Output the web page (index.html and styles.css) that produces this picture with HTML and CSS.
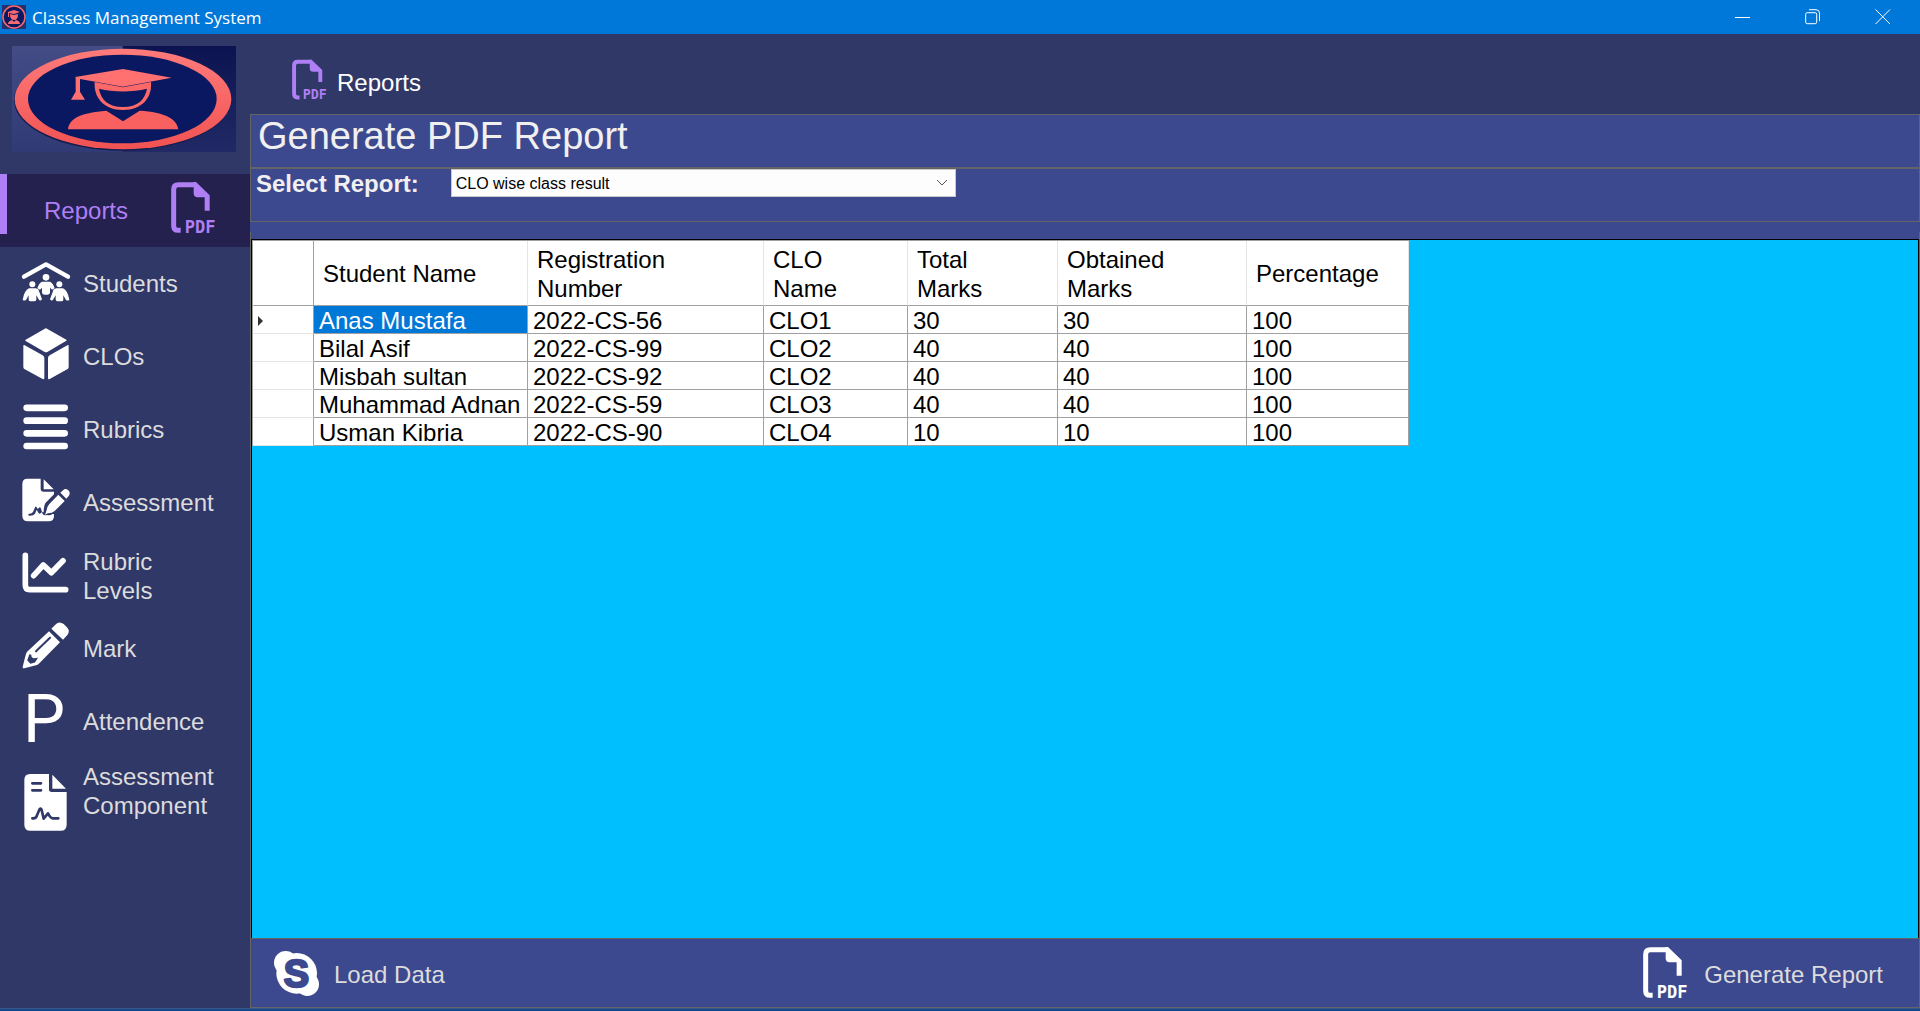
FILE: index.html
```html
<!DOCTYPE html>
<html lang="en">
<head>
<meta charset="utf-8">
<title>Classes Management System</title>
<link rel="stylesheet" href="styles.css">
</head>
<body>
<svg class="defs" aria-hidden="true">
  <defs>
    <linearGradient id="coral" x1="0" y1="0" x2="0" y2="1"><stop offset="0" stop-color="#ff7b7b"/><stop offset="1" stop-color="#f15252"/></linearGradient>
    <linearGradient id="left" x1="0" y1="0" x2="0" y2="1"><stop offset="0" stop-color="#434c85"/><stop offset="1" stop-color="#303a75"/></linearGradient>
    <linearGradient id="right" x1="0" y1="0" x2="0" y2="1"><stop offset="0" stop-color="#0b1450"/><stop offset="1" stop-color="#222a66"/></linearGradient>
    <symbol id="logo" viewBox="0 0 672 318" preserveAspectRatio="none">
      <rect width="340" height="318" fill="url(#left)"/>
      <rect x="332" width="340" height="318" fill="url(#right)"/>
      <ellipse cx="331" cy="163" rx="325" ry="151" fill="#151c4e"/>
      <ellipse cx="333" cy="159" rx="325" ry="151" fill="url(#coral)"/>
      <ellipse cx="331" cy="159" rx="283" ry="133" fill="#0a1862"/>
      <path fill="#ff7070" d="M190 93 333 69l146 26-146 27-129-23v38l15 24h-42l14-24V97z"/>
      <path fill="#fb6868" fill-rule="evenodd" d="M248 108l85 16 84-16c4 45-25 84-84 84s-88-39-85-84zm13 20c5 32 27 55 72 55s66-23 72-55c-44 11-100 11-144 0z"/>
      <path fill="#f96060" d="M168 250c4-34 40-50 115-56l50 32 50-32c74 5 111 22 116 56z"/>
    </symbol>
    <symbol id="pdf" viewBox="0 0 138 156">
      <path d="M29 145H21Q8 145 8 131V22Q8 8 22 8H74" fill="none" stroke="currentColor" stroke-width="15"/>
      <path d="M66 0h9l41 40v46h-15V46H80q-12 0-12-12V10z" fill="currentColor"/>
      <text x="41" y="152" class="pdf-text">PDF</text>
    </symbol>
  </defs>
</svg>

<header class="titlebar">
  <svg class="titlebar-icon" viewBox="0 0 24 24" aria-hidden="true">
    <rect width="24" height="24" fill="#26306a"/>
    <circle cx="12" cy="12" r="11" fill="#0a1862" stroke="#f96a70" stroke-width="1.500"/>
    <path fill="#f96a70" d="M6 7l6-2 6 2-6 2-5-1v4H6zM8 9l4 1 4-1q0 6-4 6T8 9zM6 19q0-3 4-4l2 2 2-2q4 1 4 4z"/>
  </svg>
  <span class="titlebar-name">Classes Management System</span>
  <button class="window-button" aria-label="Minimize"><svg viewBox="0 0 16 16"><path d="M0 8.500H15"/></svg></button>
  <button class="window-button" aria-label="Restore"><svg viewBox="0 0 16 16"><rect x=".7" y="3.700" width="11" height="11" rx="1.500"/><path d="M4 .7h7q3.500 0 3.500 3.500V12"/></svg></button>
  <button class="window-button" aria-label="Close"><svg viewBox="0 0 16 16"><path d="M.5.5l14.500 14.500M15 .5L.5 15"/></svg></button>
</header>

<div class="app">
  <nav class="sidebar">
    <svg class="logo" role="img" aria-label="Graduate logo"><use href="#logo"/></svg>
    <a href="#" class="nav-item active"><span>Reports</span><svg class="pdf-icon"><use href="#pdf"/></svg></a>
    <a href="#" class="nav-item">
      <svg class="nav-icon" viewBox="66 40 144 180"><path d="M72 108l66-37 66 37" fill="none" stroke="#fff" stroke-width="13" stroke-linecap="round" stroke-linejoin="round"/>
        <circle cx="138" cy="110" r="10"/><circle cx="97" cy="131" r="9"/><circle cx="178" cy="131" r="9"/>
        <path d="M126 123h24q10 5 14 20l-8 4-6-6v16q-2 5-8 5h-8q-6 0-8-5v-16l-6 6-8-4q4-15 14-20z"/>
        <path d="M87 143h20l8 3 11 30q-6 7-10 0l-7-12v13q-1 5-7 5H92q-6 0-6-5v-13l-8 14q-6 4-10-1 5-28 19-34z"/>
        <path d="M189 143h-20l-8 3-11 30q6 7 10 0l7-12v13q1 5 7 5h10q6 0 6-5v-13l8 14q6 4 10-1-5-28-19-34z"/></svg>
      <span>Students</span></a>
    <a href="#" class="nav-item">
      <svg class="nav-icon" viewBox="66 260 144 180"><path d="M137 264q2-1 4 1l58 33q2 2 0 3l-57 34q-4 2-8 0l-57-33q-3-2 0-4zM70 317q0-4 4-2l54 30q5 3 5 8v61q-1 4-5 2l-55-30q-3-2-3-6zM206 317q0-4-4-2l-53 30q-5 3-5 8v61q1 4 5 2l54-30q3-2 3-6z"/></svg>
      <span>CLOs</span></a>
    <a href="#" class="nav-item">
      <svg class="nav-icon" viewBox="66 478 144 180"><path d="M80 501.500H194M80 540H194M80 578H194M80 616H194" stroke="#fff" stroke-width="20" stroke-linecap="round"/></svg>
      <span>Rubrics</span></a>
    <a href="#" class="nav-item">
      <svg class="nav-icon" viewBox="66 698 144 180"><path d="M82 715H122V745q0 9 9 9h31v8l-25 25q-5 6-6 27-2 5-6-1-3-15-6-12l-6 5q-4-10-7-7l-7 16q-4 6-12 5-4 3 0 6 13 1 18-6l5-12 6 11q4 3 9-3 5 12 16 8 11 2 16-3 5-1 5 2v5q0 15-16 15H84q-17 0-17-17V731q0-16 15-16z"/><path d="M131 717l30 30h-30zM175 763l19 19-30 30q-8 7-19 7-4 0-11 5 4-7 6-15 1-10 8-18zM181 757l9-8q6-6 15 1 8 8 1 17l-7 8z"/></svg>
      <span>Assessment</span></a>
    <a href="#" class="nav-item">
      <svg class="nav-icon" viewBox="66 47 144 180"><path d="M76 75V165q0 13 13 13H197M101 136l29-32 24 23 35-36" fill="none" stroke="#fff" stroke-width="17" stroke-linecap="round" stroke-linejoin="round"/></svg>
      <span>Rubric<br>Levels</span></a>
    <a href="#" class="nav-item">
      <svg class="nav-icon" viewBox="66 266 144 180"><path d="M147 303l33 33-62 63q-4 4-10 6l-35 9q-6 1-5-5l9-35q2-7 6-11z"/><path d="M154 295l12-12q11-12 25-2l9 9q12 11 2 24l-13 14z"/><path d="M150 322l-42 41M91 373q-1 16 17 13l-5 8-11 3-7-8z" fill="#303868" stroke="#303868" stroke-width="6" stroke-linecap="round"/></svg>
      <span>Mark</span></a>
    <a href="#" class="nav-item">
      <svg class="nav-icon" viewBox="66 485 144 180"><text x="69" y="636" class="letter-icon">P</text></svg>
      <span>Attendence</span></a>
    <a href="#" class="nav-item nav-item-short">
      <svg class="nav-icon" viewBox="66 675 144 216"><path d="M90 732h57v46q0 8 8 8h45v98q0 18-18 18H91q-18 0-18-18V750q0-18 17-18zM157 734l41 42h-41z"/><path d="M97 760h26M97 781h26M97 865q11 2 14-9l8-19q4-3 6 3l6 26 13-16q7 16 16 15h15" fill="none" stroke="#303868" stroke-width="8" stroke-linecap="round" stroke-linejoin="round"/></svg>
      <span>Assessment<br>Component</span></a>
  </nav>

  <main class="main">
    <div class="page-title"><svg class="page-icon"><use href="#pdf"/></svg><span>Reports</span></div>
    <div class="content">
      <div class="panel heading-panel"><h1>Generate PDF Report</h1></div>
      <div class="panel filter-panel">
        <label for="report">Select Report:</label>
        <div class="select-box">
          <select id="report"><option>CLO wise class result</option></select>
          <svg class="chevron" viewBox="0 0 12 8"><path d="M1 1l5 5 5-5"/></svg>
        </div>
      </div>
      <div class="grid-panel">
        <div class="grid">
          <table>
            <colgroup><col class="c-head"><col class="c-name"><col class="c-reg"><col class="c-clo"><col class="c-total"><col class="c-obt"><col class="c-pct"></colgroup>
            <thead><tr><th class="row-head"></th><th>Student Name</th><th>Registration<br>Number</th><th>CLO<br>Name</th><th>Total<br>Marks</th><th>Obtained<br>Marks</th><th>Percentage</th></tr></thead>
            <tbody>
              <tr><td class="row-head"><svg class="pointer" viewBox="0 0 5 10"><path d="M0 0l5 5-5 5z"/></svg></td><td class="selected">Anas Mustafa</td><td>2022-CS-56</td><td>CLO1</td><td>30</td><td>30</td><td>100</td></tr>
              <tr><td class="row-head"></td><td>Bilal Asif</td><td>2022-CS-99</td><td>CLO2</td><td>40</td><td>40</td><td>100</td></tr>
              <tr><td class="row-head"></td><td>Misbah sultan</td><td>2022-CS-92</td><td>CLO2</td><td>40</td><td>40</td><td>100</td></tr>
              <tr><td class="row-head"></td><td>Muhammad Adnan</td><td>2022-CS-59</td><td>CLO3</td><td>40</td><td>40</td><td>100</td></tr>
              <tr><td class="row-head"></td><td>Usman Kibria</td><td>2022-CS-90</td><td>CLO4</td><td>10</td><td>10</td><td>100</td></tr>
            </tbody>
          </table>
        </div>
        <div class="actions">
          <button class="action"><svg class="skype-icon" viewBox="0 0 135 135"><circle cx="68" cy="67" r="61"/><circle cx="35" cy="35" r="35"/><circle cx="100" cy="100" r="35"/><text x="67" y="107" class="skype-text">S</text></svg><span>Load Data</span></button>
          <button class="action"><svg class="pdf-icon white"><use href="#pdf"/></svg><span>Generate Report</span></button>
        </div>
      </div>
    </div>
  </main>
</div>
<div class="desktop-edge"></div>
</body>
</html>
```
FILE: styles.css
```css
* { box-sizing: border-box; }

body {
  margin: 0;
  min-height: 100vh;
  display: flex;
  flex-direction: column;
  background: #303868;
  color: #dcdcdc;
  font: 24px/29px "Liberation Sans", Arial, sans-serif;
}

button {
  border: 0;
  padding: 0;
  background: none;
  color: inherit;
  font: inherit;
}

svg { display: block; flex: none; }

.defs { position: absolute; width: 0; height: 0; }

.titlebar {
  display: flex;
  align-items: center;
  height: 34px;
  padding: 0 2px;
  background: #0078d9;
  color: #fff;
  font: 17px/34px "Open Sans", "Noto Sans", sans-serif;
}
.titlebar-icon { width: 24px; height: 24px; }
.titlebar-name { margin-left: 6px; margin-right: auto; padding-top: 1px; }
.window-button {
  width: 70px;
  height: 34px;
  display: flex;
  align-items: center;
  justify-content: center;
}
.window-button svg { width: 16px; height: 16px; fill: none; stroke: #fff; stroke-width: 1; }

.app { flex: 1; display: flex; }

.sidebar { width: 250px; flex: none; }
.logo { width: 224px; height: 106px; margin: 12px 12px 22px; }
.nav-item {
  display: flex;
  align-items: center;
  gap: 13px;
  height: 73px;
  padding-left: 22px;
  color: inherit;
  text-decoration: none;
}
.nav-item-short { height: 66px; }
.nav-icon { width: 48px; height: 60px; overflow: visible; fill: #fff; }
.nav-item-short .nav-icon { height: 72px; }
.active {
  justify-content: space-between;
  padding: 0 33px 6px 44px;
  background: linear-gradient(#ae7ff5, #ae7ff5) 0 0 / 7px 60px no-repeat, #24214e;
  color: #ae7ff5;
}
.active span { padding-top: 6px; }
.pdf-icon { width: 46px; height: 52px; }
.white { color: #fff; }
.pdf-text { font: bold 51px "DejaVu Sans Mono", monospace; fill: currentColor; }
.letter-icon { font: 200px Roboto, sans-serif; fill: #fff; }

.main { flex: 1; display: flex; flex-direction: column; }
.page-title {
  display: flex;
  align-items: center;
  gap: 9px;
  height: 80px;
  padding: 16px 0 0 42px;
  color: #fff;
}
.page-icon { width: 36px; height: 42px; margin-bottom: 4px; color: #ae7ff5; }

.content {
  flex: 1;
  display: flex;
  flex-direction: column;
  background: #3d498e;
}
.panel { height: 54px; border: 1px solid #646464; color: #f0f0f0; }
.heading-panel { padding-left: 7px; }
.heading-panel h1 {
  margin: 0;
  font-size: 38px;
  font-weight: normal;
  line-height: 42px;
}
.filter-panel {
  display: flex;
  align-items: flex-start;
  gap: 32px;
  padding-left: 5px;
  font-weight: bold;
}
.select-box { position: relative; flex: 0 1 505px; }
.select-box select {
  display: block;
  width: 100%;
  height: 28px;
  padding: 0 4px;
  appearance: none;
  border: 1px solid #c8c8c8;
  border-radius: 0;
  background: #fdfdfd;
  color: #000;
  font: 16px "Liberation Sans", Arial, sans-serif;
}
.chevron {
  position: absolute;
  right: 8px;
  top: 10px;
  width: 12px;
  height: 8px;
  fill: none;
  stroke: #555;
  pointer-events: none;
}

.grid-panel {
  flex: 1;
  display: flex;
  flex-direction: column;
  margin-top: 10px;
  padding-top: 7px;
  border: solid #646464;
  border-width: 0 1px 1px;
}
.grid {
  flex: 1;
  border: 1px solid #000;
  border-bottom: 0;
  background: #00bfff;
  color: #000;
}
table {
  table-layout: fixed;
  width: 1157px;
  border-collapse: separate;
  border-spacing: 0;
  border: solid #a0a0a0;
  border-width: 1px 0 0 1px;
  background: #fff;
}
.c-head { width: 61px; }
.c-name { width: 214px; }
.c-reg { width: 236px; }
.c-clo { width: 144px; }
.c-total { width: 150px; }
.c-obt { width: 189px; }
.c-pct { width: 162px; }
th {
  height: 65px;
  padding: 1px 0 0 9px;
  border-right: 1px solid #e5e5e5;
  border-bottom: 1px solid #a0a0a0;
  text-align: left;
  font-weight: normal;
}
td {
  height: 28px;
  padding: 2px 0 0 5px;
  border-right: 1px solid #a0a0a0;
  border-bottom: 1px solid #a0a0a0;
  line-height: 25px;
  white-space: nowrap;
}
.row-head { border-right-color: #a0a0a0; }
td.row-head { border-bottom-color: #e5e5e5; }
.selected { background: #0078d7; color: #fff; }
.pointer { width: 5px; height: 10px; fill: #333; }

.actions {
  display: flex;
  justify-content: space-between;
  height: 69px;
  padding: 0 36px 0 23px;
  border-top: 1px solid #646464;
}
.action { display: flex; align-items: center; gap: 15px; }
.action span { padding-top: 2px; }
.skype-icon { width: 45px; height: 45px; fill: #fff; }
.skype-text {
  font: bold 114px "Liberation Sans", sans-serif;
  text-anchor: middle;
  fill: #3d498e;
  stroke: #3d498e;
  stroke-width: 7;
  stroke-linejoin: round;
}
.desktop-edge { height: 3px; border-top: 1px solid #3b5687; background: #104a8c; }
```
